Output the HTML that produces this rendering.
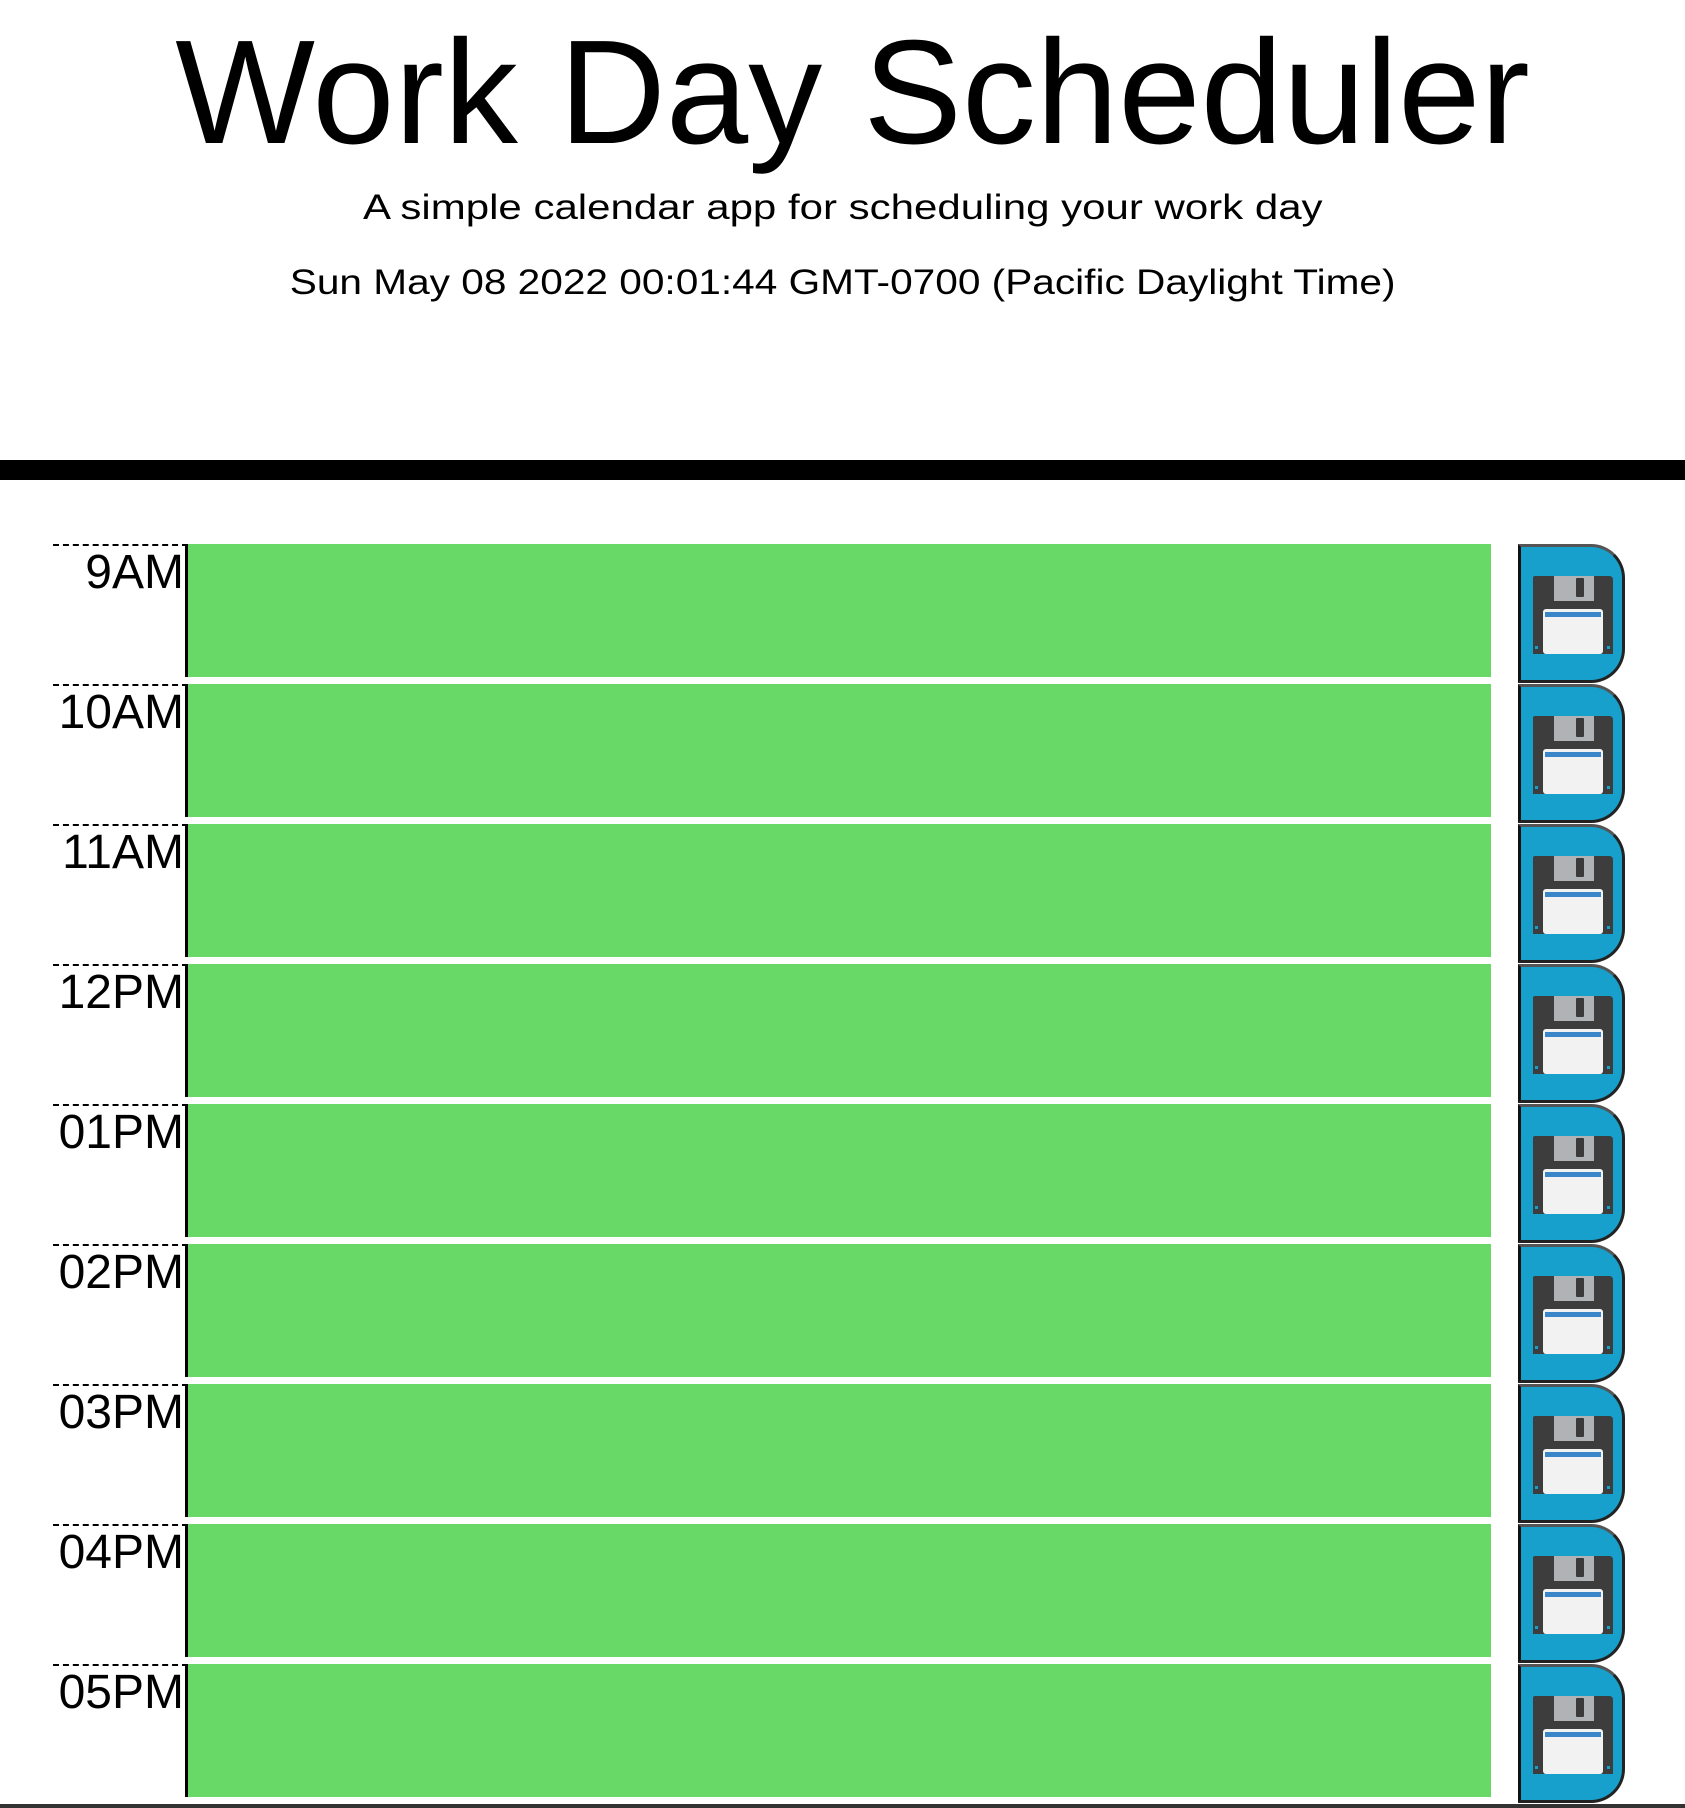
<!DOCTYPE html>
<html><head><meta charset="utf-8"><style>
*{margin:0;padding:0;box-sizing:border-box}
body{width:1685px;height:1808px;background:#fff;font-family:"Liberation Sans",sans-serif;color:#000;position:relative;overflow:hidden}
.t{position:absolute;left:0;width:1685px;text-align:center;white-space:nowrap}
.t span{display:inline-block}
.bar{position:absolute;left:0;top:460px;width:1685px;height:20px;background:#000}
.row{position:absolute;left:0;height:140px;width:1685px}
.lab{position:absolute;left:53px;top:0;width:135px;height:133px;border-top:2px dashed #000;border-right:3px solid #000;text-align:right;font-size:48px;line-height:52px;padding-top:1px;padding-right:1px}
.g{position:absolute;left:188px;top:0;width:1303px;height:133px;background:#68d966}
.btn{position:absolute;left:1518px;top:0;width:107px;height:139px;background:#16a0cb;border-left:3px solid #111;border-right:3px solid #222;border-bottom:3px solid #222;border-top:3px solid #555;border-radius:0 34px 34px 0}
.btn svg{position:absolute;left:12px;top:29px}
</style></head><body>
<div class="t" style="top:8px;left:10px;font-size:148px;line-height:170px">Work Day Scheduler</div>
<div class="t" style="top:186px;font-size:35px;line-height:44px"><span style="transform:scaleX(1.2)">A simple calendar app for scheduling your work day</span></div>
<div class="t" style="top:261px;font-size:35px;line-height:44px"><span style="transform:scaleX(1.16)">Sun May 08 2022 00:01:44 GMT-0700 (Pacific Daylight Time)</span></div>
<div class="bar"></div>

<div class="row" style="top:544px"><div class="lab">9AM</div><div class="g"></div><div class="btn"><svg width="80" height="80" viewBox="0 0 80 80"><path d="M0 2 Q0 0 2 0 H76 Q80 0 80 4 V78 H0Z" fill="#3d3d3e"/><rect x="21" y="0" width="40" height="25" fill="#b0b3b5"/><rect x="43" y="2" width="8" height="19" rx="1" fill="#3a3a3a"/><rect x="10" y="33" width="60" height="45" rx="3" fill="#f2f2f2"/><rect x="12" y="36" width="56" height="5" fill="#3b86c8"/><rect x="2" y="70" width="3" height="3" fill="#16a0cb"/><rect x="74" y="70" width="3" height="3" fill="#16a0cb"/></svg></div></div>
<div class="row" style="top:684px"><div class="lab">10AM</div><div class="g"></div><div class="btn"><svg width="80" height="80" viewBox="0 0 80 80"><path d="M0 2 Q0 0 2 0 H76 Q80 0 80 4 V78 H0Z" fill="#3d3d3e"/><rect x="21" y="0" width="40" height="25" fill="#b0b3b5"/><rect x="43" y="2" width="8" height="19" rx="1" fill="#3a3a3a"/><rect x="10" y="33" width="60" height="45" rx="3" fill="#f2f2f2"/><rect x="12" y="36" width="56" height="5" fill="#3b86c8"/><rect x="2" y="70" width="3" height="3" fill="#16a0cb"/><rect x="74" y="70" width="3" height="3" fill="#16a0cb"/></svg></div></div>
<div class="row" style="top:824px"><div class="lab">11AM</div><div class="g"></div><div class="btn"><svg width="80" height="80" viewBox="0 0 80 80"><path d="M0 2 Q0 0 2 0 H76 Q80 0 80 4 V78 H0Z" fill="#3d3d3e"/><rect x="21" y="0" width="40" height="25" fill="#b0b3b5"/><rect x="43" y="2" width="8" height="19" rx="1" fill="#3a3a3a"/><rect x="10" y="33" width="60" height="45" rx="3" fill="#f2f2f2"/><rect x="12" y="36" width="56" height="5" fill="#3b86c8"/><rect x="2" y="70" width="3" height="3" fill="#16a0cb"/><rect x="74" y="70" width="3" height="3" fill="#16a0cb"/></svg></div></div>
<div class="row" style="top:964px"><div class="lab">12PM</div><div class="g"></div><div class="btn"><svg width="80" height="80" viewBox="0 0 80 80"><path d="M0 2 Q0 0 2 0 H76 Q80 0 80 4 V78 H0Z" fill="#3d3d3e"/><rect x="21" y="0" width="40" height="25" fill="#b0b3b5"/><rect x="43" y="2" width="8" height="19" rx="1" fill="#3a3a3a"/><rect x="10" y="33" width="60" height="45" rx="3" fill="#f2f2f2"/><rect x="12" y="36" width="56" height="5" fill="#3b86c8"/><rect x="2" y="70" width="3" height="3" fill="#16a0cb"/><rect x="74" y="70" width="3" height="3" fill="#16a0cb"/></svg></div></div>
<div class="row" style="top:1104px"><div class="lab">01PM</div><div class="g"></div><div class="btn"><svg width="80" height="80" viewBox="0 0 80 80"><path d="M0 2 Q0 0 2 0 H76 Q80 0 80 4 V78 H0Z" fill="#3d3d3e"/><rect x="21" y="0" width="40" height="25" fill="#b0b3b5"/><rect x="43" y="2" width="8" height="19" rx="1" fill="#3a3a3a"/><rect x="10" y="33" width="60" height="45" rx="3" fill="#f2f2f2"/><rect x="12" y="36" width="56" height="5" fill="#3b86c8"/><rect x="2" y="70" width="3" height="3" fill="#16a0cb"/><rect x="74" y="70" width="3" height="3" fill="#16a0cb"/></svg></div></div>
<div class="row" style="top:1244px"><div class="lab">02PM</div><div class="g"></div><div class="btn"><svg width="80" height="80" viewBox="0 0 80 80"><path d="M0 2 Q0 0 2 0 H76 Q80 0 80 4 V78 H0Z" fill="#3d3d3e"/><rect x="21" y="0" width="40" height="25" fill="#b0b3b5"/><rect x="43" y="2" width="8" height="19" rx="1" fill="#3a3a3a"/><rect x="10" y="33" width="60" height="45" rx="3" fill="#f2f2f2"/><rect x="12" y="36" width="56" height="5" fill="#3b86c8"/><rect x="2" y="70" width="3" height="3" fill="#16a0cb"/><rect x="74" y="70" width="3" height="3" fill="#16a0cb"/></svg></div></div>
<div class="row" style="top:1384px"><div class="lab">03PM</div><div class="g"></div><div class="btn"><svg width="80" height="80" viewBox="0 0 80 80"><path d="M0 2 Q0 0 2 0 H76 Q80 0 80 4 V78 H0Z" fill="#3d3d3e"/><rect x="21" y="0" width="40" height="25" fill="#b0b3b5"/><rect x="43" y="2" width="8" height="19" rx="1" fill="#3a3a3a"/><rect x="10" y="33" width="60" height="45" rx="3" fill="#f2f2f2"/><rect x="12" y="36" width="56" height="5" fill="#3b86c8"/><rect x="2" y="70" width="3" height="3" fill="#16a0cb"/><rect x="74" y="70" width="3" height="3" fill="#16a0cb"/></svg></div></div>
<div class="row" style="top:1524px"><div class="lab">04PM</div><div class="g"></div><div class="btn"><svg width="80" height="80" viewBox="0 0 80 80"><path d="M0 2 Q0 0 2 0 H76 Q80 0 80 4 V78 H0Z" fill="#3d3d3e"/><rect x="21" y="0" width="40" height="25" fill="#b0b3b5"/><rect x="43" y="2" width="8" height="19" rx="1" fill="#3a3a3a"/><rect x="10" y="33" width="60" height="45" rx="3" fill="#f2f2f2"/><rect x="12" y="36" width="56" height="5" fill="#3b86c8"/><rect x="2" y="70" width="3" height="3" fill="#16a0cb"/><rect x="74" y="70" width="3" height="3" fill="#16a0cb"/></svg></div></div>
<div class="row" style="top:1664px"><div class="lab">05PM</div><div class="g"></div><div class="btn"><svg width="80" height="80" viewBox="0 0 80 80"><path d="M0 2 Q0 0 2 0 H76 Q80 0 80 4 V78 H0Z" fill="#3d3d3e"/><rect x="21" y="0" width="40" height="25" fill="#b0b3b5"/><rect x="43" y="2" width="8" height="19" rx="1" fill="#3a3a3a"/><rect x="10" y="33" width="60" height="45" rx="3" fill="#f2f2f2"/><rect x="12" y="36" width="56" height="5" fill="#3b86c8"/><rect x="2" y="70" width="3" height="3" fill="#16a0cb"/><rect x="74" y="70" width="3" height="3" fill="#16a0cb"/></svg></div></div>
<div style="position:absolute;left:0;top:1804px;width:1685px;height:4px;background:#333"></div>
</body></html>
